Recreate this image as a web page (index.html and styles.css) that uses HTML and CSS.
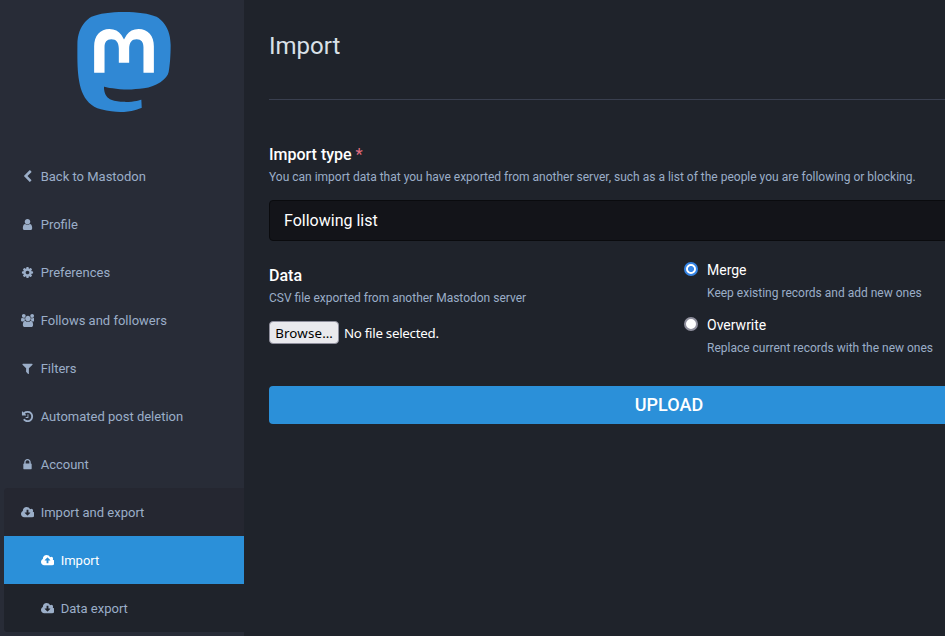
FILE: index.html
```html
<!DOCTYPE html>
<html lang="en">
<head>
<meta charset="utf-8">
<title>Import - Mastodon</title>
<link rel="stylesheet" href="styles.css">
</head>
<body>
<svg class="sprite" aria-hidden="true">
  <symbol id="cloud-down" viewBox="0 -128 1920 1792"><path d="M1280 800q0-14-9-23t-23-9h-224v-352q0-13-9.5-22.5t-22.5-9.5h-192q-13 0-22.5 9.5t-9.5 22.5v352h-224q-13 0-22.5 9.5t-9.5 22.5q0 14 9 23l352 352q9 9 23 9t23-9l351-351q10-12 10-24zm640 224q0 159-112.5 271.5t-271.5 112.5h-1088q-185 0-316.5-131.5t-131.5-316.5q0-130 70-240t188-165q-2-30-2-43 0-212 150-362t362-150q156 0 285.5 87t188.5 231q71-62 166-62 106 0 181 75t75 181q0 76-41 138 130 31 213.5 135.5t83.5 238.5z" fill-rule="evenodd"/></symbol>
  <symbol id="cloud-up" viewBox="0 -128 1920 1792"><path d="M1280 736q0-14-9-23l-352-352q-9-9-23-9t-23 9l-351 351q-10 12-10 24 0 14 9 23t23 9h224v352q0 13 9.5 22.5t22.5 9.5h192q13 0 22.5-9.5t9.5-22.5v-352h224q13 0 22.5-9.5t9.5-22.5zm640 288q0 159-112.5 271.5t-271.5 112.5h-1088q-185 0-316.5-131.5t-131.5-316.5q0-130 70-240t188-165q-2-30-2-43 0-212 150-362t362-150q156 0 285.5 87t188.5 231q71-62 166-62 106 0 181 75t75 181q0 76-41 138 130 31 213.5 135.5t83.5 238.5z" fill-rule="evenodd"/></symbol>
</svg>
<div class="layout">
  <aside class="sidebar">
    <a class="logo" href="#">
      <svg viewBox="0 0 216.4144 232.00976"><path fill="#3088d4" d="M211.80734 139.0875c-3.18125 16.36625-28.4925 34.2775-57.5625 37.74875-15.15875 1.80875-30.08375 3.47125-45.99875 2.74125-26.0275-1.1925-46.565-6.2125-46.565-6.2125 0 2.53375.15625 4.94625.46875 7.2025 3.38375 25.68625 25.47 27.225 46.39125 27.9425 21.11625.7225 39.91875-5.20625 39.91875-5.20625l.8675 19.09s-14.77 7.93125-41.08125 9.39c-14.50875.7975-32.52375-.365-53.50625-5.91875C9.23234 213.82 1.40609 165.31125.20859 116.09125c-.365-14.61375-.14-28.39375-.14-39.91875 0-50.33 32.97625-65.0825 32.97625-65.0825C49.67234 3.45375 78.20359.2425 107.86484 0h.72875c29.66125.2425 58.21125 3.45375 74.8375 11.09 0 0 32.975 14.7525 32.975 65.0825 0 0 .41375 37.13375-4.59875 62.915"/><path fill="#fff" d="M177.50984 80.077v60.94125h-24.14375v-59.15c0-12.46875-5.24625-18.7975-15.74-18.7975-11.6025 0-17.4175 7.5075-17.4175 22.3525v32.37625H96.20734V85.42325c0-14.845-5.81625-22.3525-17.41875-22.3525-10.49375 0-15.74 6.32875-15.74 18.7975v59.15H38.90484V80.077c0-12.455 3.17125-22.3525 9.54125-29.675 6.56875-7.3225 15.17125-11.07625 25.85-11.07625 12.355 0 21.71125 4.74875 27.8975 14.2475l6.01375 10.08125 6.015-10.08125c6.185-9.49875 15.54125-14.2475 27.8975-14.2475 10.6775 0 19.28 3.75375 25.85 11.07625 6.36875 7.3225 9.54 17.22 9.54 29.675"/></svg>
    </a>
    <ul class="menu">
      <li><a href="#"><span class="fa"><svg viewBox="0 0 1792 1792"><path d="M1427 301l-531 531 531 531q19 19 19 45t-19 45l-166 166q-19 19-45 19t-45-19l-742-742q-19-19-19-45t19-45l742-742q19-19 45-19t45 19l166 166q19 19 19 45t-19 45z"/></svg></span>Back to Mastodon</a></li>
      <li><a href="#"><span class="fa"><svg viewBox="0 0 1792 1792"><path d="M1536 1399q0 109-62.5 187t-150.5 78h-854q-88 0-150.5-78t-62.5-187q0-85 8.5-160.5t31.5-152 58.5-131 94-89 134.5-34.5q131 128 313 128t313-128q76 0 134.5 34.5t94 89 58.5 131 31.5 152 8.5 160.5zm-256-887q0 159-112.5 271.5t-271.5 112.5-271.5-112.5-112.5-271.5 112.5-271.5 271.5-112.5 271.5 112.5 112.5 271.5z"/></svg></span>Profile</a></li>
      <li><a href="#"><span class="fa"><svg viewBox="0 0 1792 1792"><path d="M1152 896q0-106-75-181t-181-75-181 75-75 181 75 181 181 75 181-75 75-181zm512-109v222q0 12-8 23t-20 13l-185 28q-19 54-39 91 35 50 107 138 10 12 10 25t-9 23q-27 37-99 108t-94 71q-12 0-26-9l-138-108q-44 23-91 38-16 136-29 186-7 28-36 28h-222q-14 0-24.5-8.5t-11.5-21.5l-28-184q-49-16-90-37l-141 107q-10 9-25 9-14 0-25-11-126-114-165-168-7-10-7-23 0-12 8-23 15-21 51-66.5t54-70.5q-27-50-41-99l-183-27q-13-2-21-12.5t-8-23.5v-222q0-12 8-23t19-13l186-28q14-46 39-92-40-57-107-138-10-12-10-24 0-10 9-23 26-36 98.5-107.5t94.5-71.5q13 0 26 10l138 107q44-23 91-38 16-136 29-186 7-28 36-28h222q14 0 24.5 8.5t11.5 21.5l28 184q49 16 90 37l142-107q9-9 24-9 13 0 25 10 129 119 165 170 7 8 7 22 0 12-8 23-15 21-51 66.5t-54 70.5q26 50 41 98l183 28q13 2 21 12.5t8 23.5z" fill-rule="evenodd"/></svg></span>Preferences</a></li>
      <li><a href="#"><span class="fa"><svg class="wide" viewBox="0 0 1920 1792"><path transform="translate(0 1536) scale(1 -1)" d="M593 640q-162 -5 -265 -128h-134q-82 0 -138 40.5t-56 118.5q0 353 124 353q6 0 43.5 -21t97.5 -42.5t119 -21.5q67 0 133 23q-5 -37 -5 -66q0 -139 81 -256zM1664 3q0 -120 -73 -189.5t-194 -69.5h-874q-121 0 -194 69.5t-73 189.5q0 53 3.5 103.5t14 109t26.5 108.5t43 97.5t62 81t85.5 53.5t111.5 20q10 0 43 -21.5t73 -48t107 -48t135 -21.5t135 21.5t107 48t73 48t43 21.5q61 0 111.5 -20t85.5 -53.5t62 -81t43 -97.5t26.5 -108.5t14 -109t3.5 -103.5zM640 1280q0 -106 -75 -181t-181 -75t-181 75t-75 181t75 181t181 75t181 -75t75 -181zM1344 896q0 -159 -112.5 -271.5t-271.5 -112.5t-271.5 112.5t-112.5 271.5t112.5 271.5t271.5 112.5t271.5 -112.5t112.5 -271.5zM1920 671q0 -78 -56 -118.5t-138 -40.5h-134q-103 123 -265 128q81 117 81 256q0 29 -5 66q66 -23 133 -23q59 0 119 21.5t97.5 42.5t43.5 21q124 0 124 -353zM1792 1280q0 -106 -75 -181t-181 -75t-181 75t-75 181t75 181t181 75t181 -75t75 -181z"/></svg></span>Follows and followers</a></li>
      <li><a href="#"><span class="fa"><svg viewBox="0 0 1792 1792"><path d="M1595 295q17 41-14 70l-493 493v742q0 42-39 59-13 5-25 5-27 0-45-19l-256-256q-19-19-19-45v-486l-493-493q-31-29-14-70 17-39 59-39h1280q42 0 59 39z"/></svg></span>Filters</a></li>
      <li><a href="#"><span class="fa"><svg viewBox="0 0 1792 1792"><path d="M1664 896q0 156-61 298t-164 245-245 164-298 61q-172 0-327-72.5t-264-204.5q-7-10-6.5-22.5t8.5-20.5l137-138q10-9 25-9 16 2 23 12 73 95 179 147t225 52q104 0 198.5-40.5t163.5-109.5 109.5-163.5 40.5-198.5-40.5-198.5-109.5-163.5-163.5-109.5-198.5-40.5q-98 0-188 35.5t-160 101.5l137 138q31 30 14 69-17 40-59 40h-448q-26 0-45-19t-19-45v-448q0-42 40-59 39-17 69 14l130 129q107-101 244.5-156.5t284.5-55.5q156 0 298 61t245 164 164 245 61 298zm-640-288v448q0 14-9 23t-23 9h-320q-14 0-23-9t-9-23v-64q0-14 9-23t23-9h224v-352q0-14 9-23t23-9h64q14 0 23 9t9 23z"/></svg></span>Automated post deletion</a></li>
      <li><a href="#"><span class="fa"><svg viewBox="0 0 1792 1792"><path d="M640 768h512v-192q0-106-75-181t-181-75-181 75-75 181v192zm832 96v576q0 40-28 68t-68 28h-960q-40 0-68-28t-28-68v-576q0-40 28-68t68-28h32v-192q0-184 132-316t316-132 316 132 132 316v192h32q40 0 68 28t28 68z" fill-rule="evenodd"/></svg></span>Account</a></li>
      <li class="open"><a href="#"><span class="fa"><svg class="wide"><use href="#cloud-down"/></svg></span>Import and export</a>
        <ul class="submenu">
          <li><a class="selected" href="#"><span class="fa"><svg class="wide"><use href="#cloud-up"/></svg></span>Import</a></li>
          <li><a href="#"><span class="fa"><svg class="wide"><use href="#cloud-down"/></svg></span>Data export</a></li>
        </ul>
      </li>
    </ul>
  </aside>
  <main class="content">
    <header class="heading"><h2>Import</h2></header>
    <form class="form">
      <div class="field">
        <label class="label">Import type <abbr>*</abbr></label>
        <p class="hint">You can import data that you have exported from another server, such as a list of the people you are following or blocking.</p>
        <div class="select">Following list</div>
      </div>
      <div class="row">
        <div class="col">
          <label class="label">Data</label>
          <p class="hint">CSV file exported from another Mastodon server</p>
          <div class="file"><button type="button">Browse…</button><span>No file selected.</span></div>
        </div>
        <div class="col options">
          <label class="option"><span class="radio on"></span><span class="name">Merge</span><span class="hint">Keep existing records and add new ones</span></label>
          <label class="option"><span class="radio"></span><span class="name">Overwrite</span><span class="hint">Replace current records with the new ones</span></label>
        </div>
      </div>
      <button class="submit" type="button">Upload</button>
    </form>
  </main>
</div>
</body>
</html>
```
FILE: styles.css
```css
* { box-sizing: border-box; }
body {
  margin: 0;
  background: #1f232b;
  color: #fff;
  font-family: Roboto, sans-serif;
  font-size: 13px;
  line-height: 18px;
  overflow: hidden;
}
ul, h2, p { margin: 0; padding: 0; list-style: none; }
a { text-decoration: none; color: inherit; }
.sprite { display: none; }
.layout { display: flex; height: 636px; overflow: hidden; }

.sidebar { flex: 0 0 244px; padding-left: 4px; background: #282c37; }
.logo { display: flex; justify-content: center; height: 152px; padding-top: 12px; }
.logo svg { width: 94px; height: 100px; }
.menu a { display: block; height: 48px; padding: 16px 15px 14px; color: #9baec8; }
.fa { display: inline-block; width: 16.7px; margin-right: 5px; text-align: center; line-height: 13px; }
.fa svg { width: 13px; height: 13px; vertical-align: -1.86px; fill: currentColor; }
.fa svg.wide { width: 13.93px; margin: 0 -0.2px 0 0.2px; }
.open { background: #252731; border-radius: 4px 0 0 4px; overflow: hidden; }
.submenu { background: #1f232b; }
.submenu a { padding-left: 35px; }
.menu .selected { background: #2b90d9; color: #fff; }

.content { flex: 0 0 850px; padding: 0 25px; }
.heading { height: 100px; border-bottom: 1px solid #393f4f; padding-top: 31px; }
.heading h2 { font-size: 24px; line-height: 30px; font-weight: 400; color: #d9e1e8; }
.form { padding-top: 44px; }
.label { display: block; font-size: 16px; line-height: 21px; font-weight: 500; }
.label abbr { color: #df6a7d; }
.hint { font-size: 12px; line-height: 18px; color: #9baec8; margin-top: 3px; }
.select {
  height: 41px;
  margin-top: 14px;
  padding: 0 14px;
  border: 1px solid #0a0b0e;
  border-radius: 4px;
  background: #131419;
  font-size: 16px;
  line-height: 39px;
}
.row { display: flex; gap: 10px; height: 145px; }
.col { flex: 0 0 395px; padding-top: 24px; }
.options { padding: 19px 0 0 10px; }
.file { display: flex; align-items: center; gap: 5px; margin-top: 14px; font: 13.33px/18px "Noto Sans", sans-serif; }
.file span { letter-spacing: -0.28px; }
.file button {
  width: 70px;
  height: 23px;
  padding: 0;
  border: 1px solid #8f8f9d;
  border-radius: 4px;
  background: #e9e9ed;
  color: #000;
  font: inherit;
  letter-spacing: 0.15px;
}
.option { display: grid; grid-template-columns: 14px 1fr; column-gap: 9px; height: 55px; align-content: start; }
.option .name { font-size: 14px; line-height: 20px; }
.option .hint { grid-column: 2; margin-top: 4px; }
.radio { width: 14px; height: 14px; margin-top: 2px; border-radius: 50%; border: 2px solid #8f8f9d; background: #fff; }
.radio.on { border-color: #3584e4; background: radial-gradient(circle, #3584e4 0 2.7px, #fff 3.3px); }
.submit {
  display: block;
  width: 800px;
  height: 38px;
  padding: 0;
  border: 0;
  border-radius: 4px;
  background: #2b90d9;
  color: #fff;
  font: 500 18px/38px Roboto, sans-serif;
  text-transform: uppercase;
}
```
